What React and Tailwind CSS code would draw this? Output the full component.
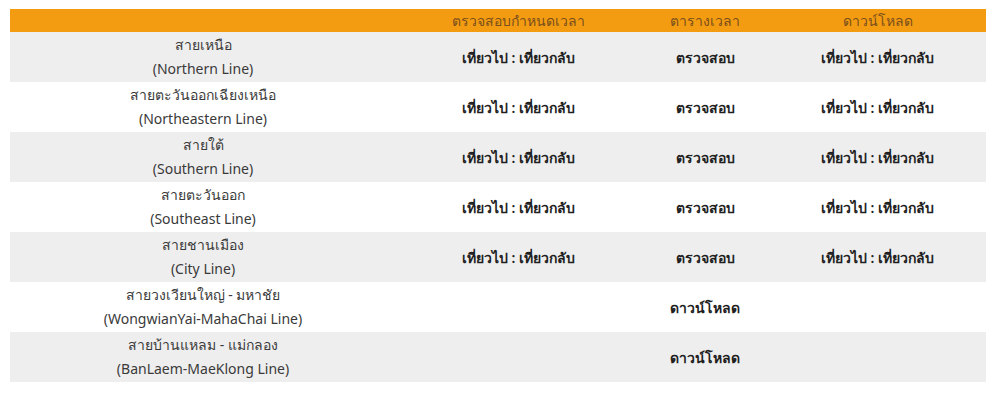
import React from "react";

const lines = [
  { th: "สายเหนือ", en: "(Northern Line)", full: true },
  { th: "สายตะวันออกเฉียงเหนือ", en: "(Northeastern Line)", full: true },
  { th: "สายใต้", en: "(Southern Line)", full: true },
  { th: "สายตะวันออก", en: "(Southeast Line)", full: true },
  { th: "สายชานเมือง", en: "(City Line)", full: true },
  { th: "สายวงเวียนใหญ่ - มหาชัย", en: "(WongwianYai-MahaChai Line)", full: false },
  { th: "สายบ้านแหลม - แม่กลอง", en: "(BanLaem-MaeKlong Line)", full: false },
];

const TripLinks = () => (
  <span>
    <a href="#">เที่ยวไป</a> : <a href="#">เที่ยวกลับ</a>
  </span>
);

const App = () => {
  return (
    <div
      className="w-[1000px] h-[405px] bg-white pt-[9px] pl-[10px] text-[14px] text-[#3a3a3a]"
      style={{ fontFamily: '"Noto Sans", "Liberation Sans", sans-serif' }}
    >
      <table className="w-[976px] border-collapse text-center">
        <thead>
          <tr className="bg-[#f39c12] h-[23px] text-[#7a4f1c]">
            <th className="w-[386px] font-normal"></th>
            <th className="w-[245px] font-normal">ตรวจสอบกำหนดเวลา</th>
            <th className="w-[128px] font-normal">ตารางเวลา</th>
            <th className="font-normal">ดาวน์โหลด</th>
          </tr>
        </thead>
        <tbody>
          {lines.map((line, i) => (
            <tr
              key={line.en}
              className={`h-[50px] ${i % 2 === 0 ? "bg-[#eeeeee]" : "bg-white"}`}
            >
              <td className="leading-[24px] py-px">
                <div>{line.th}</div>
                <div>{line.en}</div>
              </td>
              <td className="font-semibold text-[#1f1f1f]">
                {line.full && <TripLinks />}
              </td>
              <td className="font-semibold text-[#1f1f1f]">
                {line.full ? <a href="#">ตรวจสอบ</a> : <a href="#">ดาวน์โหลด</a>}
              </td>
              <td className="font-semibold text-[#1f1f1f]">
                {line.full && <TripLinks />}
              </td>
            </tr>
          ))}
        </tbody>
      </table>
    </div>
  );
};

export default App;
